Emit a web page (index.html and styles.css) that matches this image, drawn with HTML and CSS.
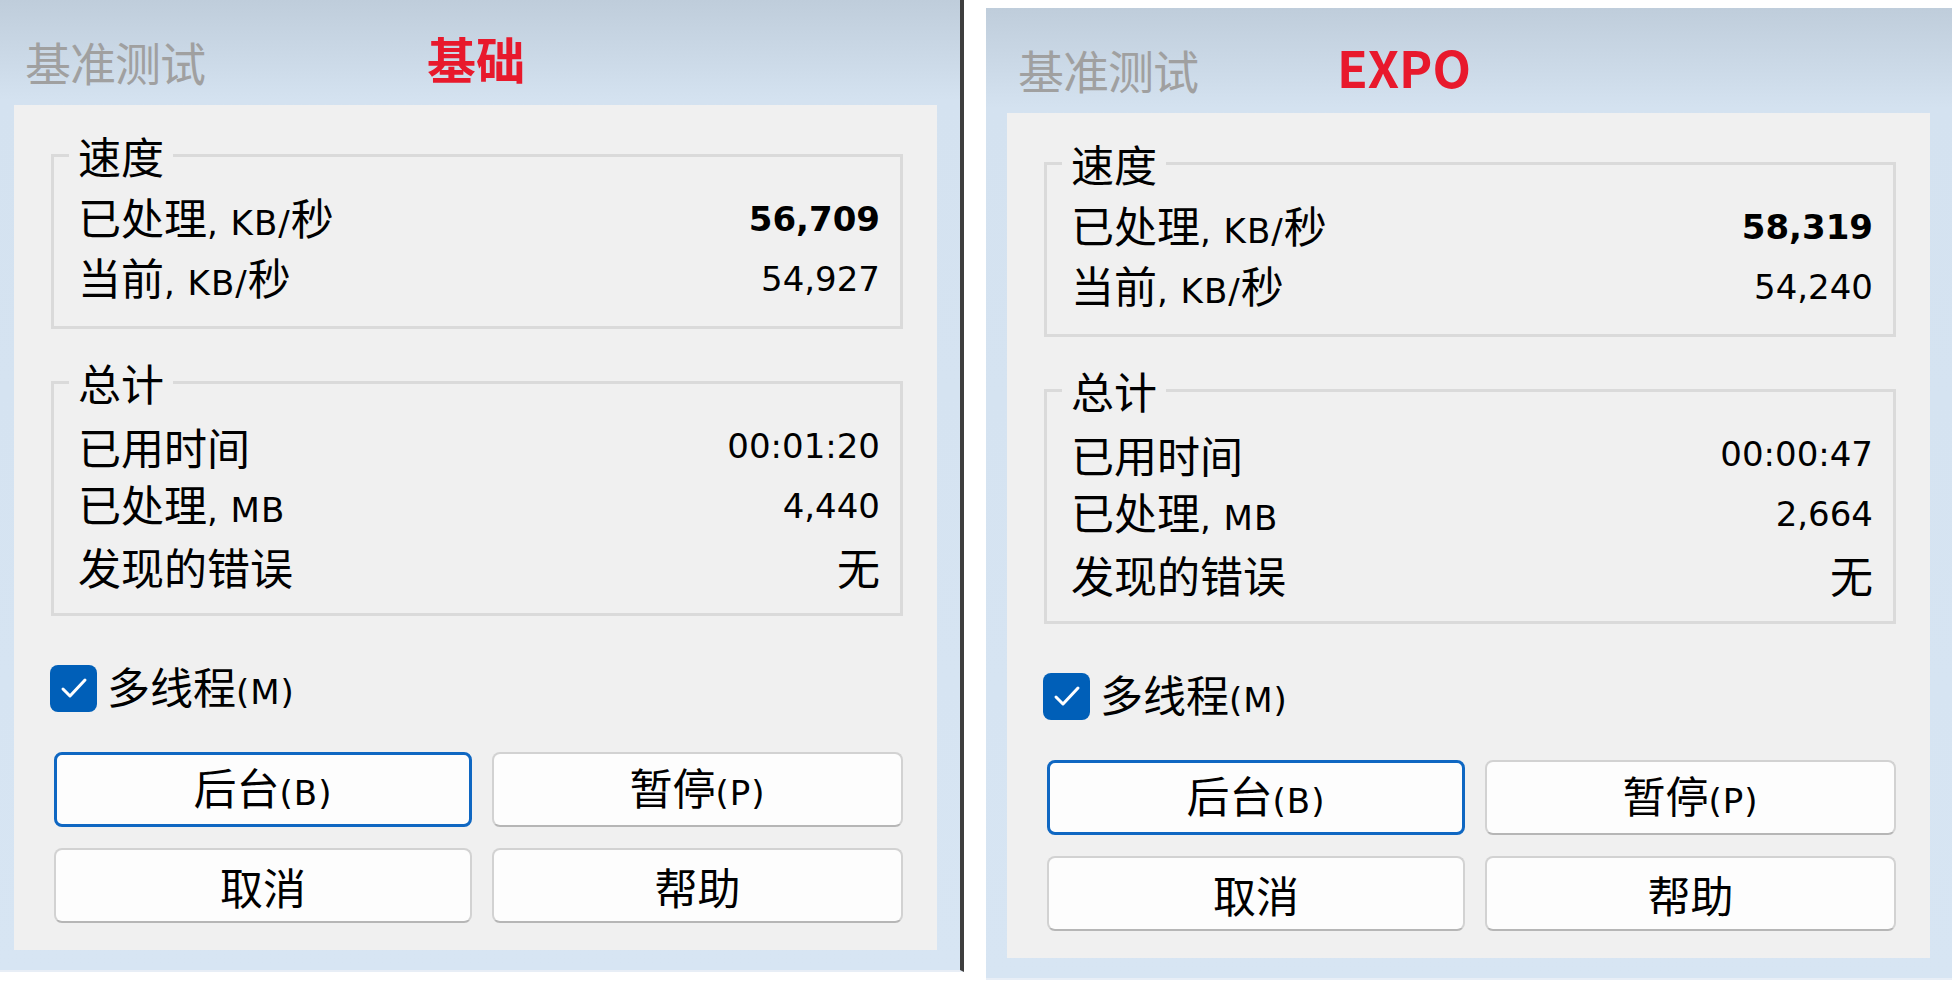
FILE: index.html
```html
<!DOCTYPE html>
<html lang="zh-CN">
<head>
<meta charset="utf-8">
<title>基准测试</title>
<link rel="stylesheet" href="styles.css">
</head>
<body>
<div class="screen">
  <div class="win win-left">
    <div class="titlebar">
      <span class="title">基准测试</span>
      <span class="tag tag-left">基础</span>
    </div>
    <div class="panel">
      <fieldset class="group">
        <legend>速度</legend>
        <div class="row"><span>已处理<span class="en">, KB/</span>秒</span><span class="num bold">56,709</span></div>
        <div class="row"><span>当前<span class="en">, KB/</span>秒</span><span class="num">54,927</span></div>
      </fieldset>
      <fieldset class="group group-total">
        <legend>总计</legend>
        <div class="row"><span>已用时间</span><span class="num">00:01:20</span></div>
        <div class="row"><span>已处理<span class="en">, MB</span></span><span class="num">4,440</span></div>
        <div class="row"><span>发现的错误</span><span>无</span></div>
      </fieldset>
      <div class="check">
        <span class="box"><svg width="47" height="47" viewBox="0 0 47 47"><rect x="0" y="0" width="47" height="47" rx="8" fill="#005fb8"/><path d="M13 24 L20 31 L35 15" fill="none" stroke="#ffffff" stroke-width="3" stroke-linecap="round" stroke-linejoin="round"/></svg></span>
        <span class="check-label">多线程<span class="en">(M)</span></span>
      </div>
      <div class="buttons">
        <button class="btn btn-focus">后台<span class="en">(B)</span></button>
        <button class="btn">暂停<span class="en">(P)</span></button>
        <button class="btn">取消</button>
        <button class="btn">帮助</button>
      </div>
    </div>
  </div>

  <div class="win win-right">
    <div class="titlebar">
      <span class="title">基准测试</span>
      <span class="tag tag-right">EXPO</span>
    </div>
    <div class="panel">
      <fieldset class="group">
        <legend>速度</legend>
        <div class="row"><span>已处理<span class="en">, KB/</span>秒</span><span class="num bold">58,319</span></div>
        <div class="row"><span>当前<span class="en">, KB/</span>秒</span><span class="num">54,240</span></div>
      </fieldset>
      <fieldset class="group group-total">
        <legend>总计</legend>
        <div class="row"><span>已用时间</span><span class="num">00:00:47</span></div>
        <div class="row"><span>已处理<span class="en">, MB</span></span><span class="num">2,664</span></div>
        <div class="row"><span>发现的错误</span><span>无</span></div>
      </fieldset>
      <div class="check">
        <span class="box"><svg width="47" height="47" viewBox="0 0 47 47"><rect x="0" y="0" width="47" height="47" rx="8" fill="#005fb8"/><path d="M13 24 L20 31 L35 15" fill="none" stroke="#ffffff" stroke-width="3" stroke-linecap="round" stroke-linejoin="round"/></svg></span>
        <span class="check-label">多线程<span class="en">(M)</span></span>
      </div>
      <div class="buttons">
        <button class="btn btn-focus">后台<span class="en">(B)</span></button>
        <button class="btn">暂停<span class="en">(P)</span></button>
        <button class="btn">取消</button>
        <button class="btn">帮助</button>
      </div>
    </div>
  </div>
</div>
</body>
</html>
```

FILE: styles.css
```css
html, body {
  margin: 0;
  padding: 0;
  background: #ffffff;
}

body {
  width: 1952px;
  height: 983px;
  overflow: hidden;
  font-family: "Noto Sans CJK SC", "Noto Sans", sans-serif;
  color: #000;
}

.screen {
  display: flex;
  align-items: flex-start;
  width: 1952px;
  height: 983px;
  overflow: hidden;
}

.win {
  flex: none;
  box-sizing: border-box;
  padding: 0 23px 20px 21px;
  background: linear-gradient(to bottom, #bfcddb 0px, #d4e2f0 100px, #d7e5f3 100%);
  border-bottom: 2px solid #e8eef6;
}

.win-left {
  width: 971px;
  margin-left: -7px;
  border-right: 4px solid #3e3e3e;
}

.win-right {
  width: 967px;
  margin-left: 22px;
  margin-top: 8px;
}

.titlebar {
  height: 105px;
  box-sizing: border-box;
  display: flex;
  align-items: center;
  padding-top: 16px;
  padding-left: 11px;
}

.title {
  font-size: 46px;
  line-height: 50px;
  color: #a0a0a0;
  letter-spacing: -1px;
}

.tag {
  font-weight: 700;
  color: #e8192c;
  line-height: 50px;
}

.tag-left {
  font-size: 49px;
  margin-left: 222px;
  margin-top: -6px;
}

.tag-right {
  font-size: 50px;
  margin-left: 139px;
  margin-top: -6px;
}

.panel {
  width: 923px;
  height: 845px;
  box-sizing: border-box;
  background: #f0f0f0;
  padding: 27px 34px 0 37px;
}

.group {
  margin: 0;
  min-inline-size: 0;
  border: 3px solid #dadada;
  padding: 11px 20px 17px 24px;
}

.group-total {
  margin-top: 30px;
}

.group legend {
  font-size: 43px;
  line-height: 46px;
  padding: 0 9px;
  margin-left: -9px;
}

.row {
  display: flex;
  justify-content: space-between;
  align-items: center;
  height: 60px;
  font-size: 43px;
  line-height: 60px;
  white-space: nowrap;
}

.en {
  font-family: "DejaVu Sans", sans-serif;
  font-size: 34px;
  letter-spacing: 1px;
}

.num {
  font-family: "DejaVu Sans", sans-serif;
  font-size: 34px;
}

.bold {
  font-weight: 700;
}

.check {
  display: flex;
  align-items: center;
  height: 48px;
  margin-top: 48px;
  margin-left: -1px;
  font-size: 43px;
  line-height: 48px;
}

.box {
  display: flex;
  width: 47px;
  height: 47px;
}

.check-label {
  margin-left: 10px;
  white-space: nowrap;
}

.buttons {
  display: grid;
  grid-template-columns: 418px 411px;
  grid-auto-rows: 75px;
  column-gap: 20px;
  row-gap: 21px;
  margin-top: 40px;
  margin-left: 3px;
}

.btn {
  box-sizing: border-box;
  margin: 0;
  padding: 0;
  background: #fdfdfd;
  border: 2px solid #d2d2d2;
  border-bottom-color: #b6b6b6;
  border-radius: 8px;
  font-family: "Noto Sans CJK SC", "Noto Sans", sans-serif;
  font-size: 43px;
  line-height: 60px;
  color: #000;
  white-space: nowrap;
}

.btn-focus {
  border: 3px solid #0f67c2;
}
```
